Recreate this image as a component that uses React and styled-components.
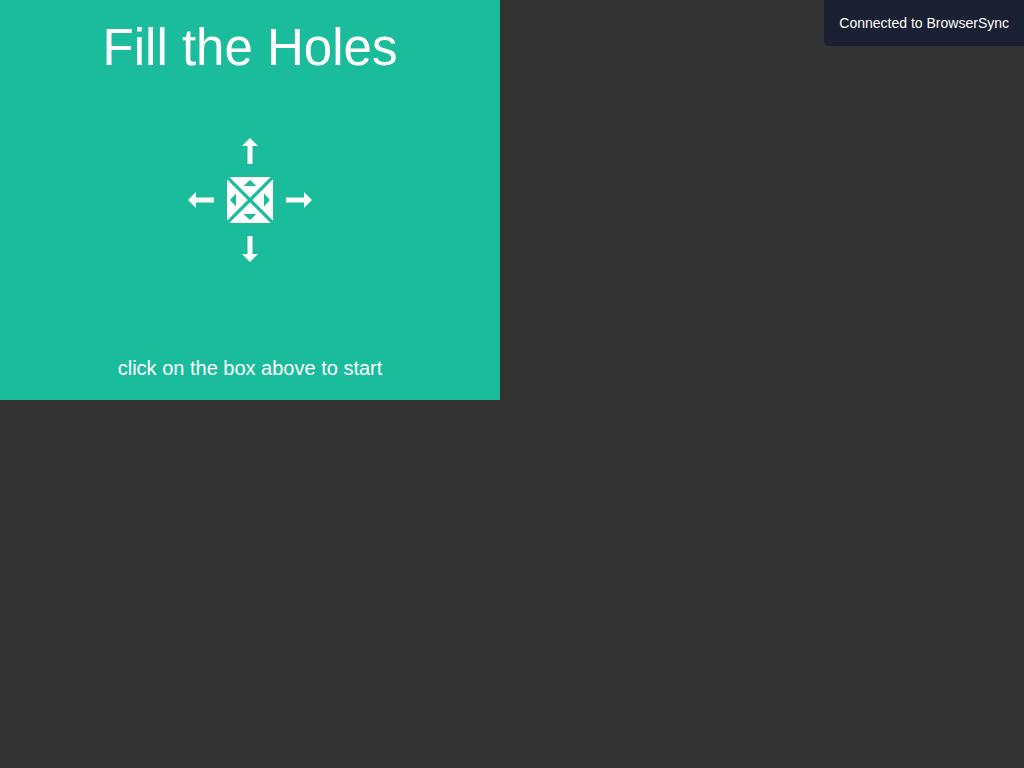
import React from "react";
import styled, { createGlobalStyle } from "styled-components";

const GlobalStyle = createGlobalStyle`
  body {
    margin: 0;
    background: #333333;
    font-family: "Liberation Sans", Arial, sans-serif;
  }
`;

const Game = styled.main`
  box-sizing: border-box;
  display: flex;
  flex-direction: column;
  align-items: center;
  justify-content: space-between;
  width: 100%;
  max-width: 500px;
  min-height: 400px;
  padding: 20px 0;
  background: #1abc9c;
  color: #ffffff;
  text-align: center;
`;

const Title = styled.h1`
  margin: 0;
  font-size: 51px;
  font-weight: 400;
  line-height: 56px;
`;

const Pad = styled.div`
  display: grid;
  grid-template-columns: repeat(3, auto);
  align-items: center;
  justify-items: center;
  gap: 12px;
  margin-bottom: 32px;
`;

const Arrow = styled.svg`
  display: block;
  grid-area: ${(p) => p.$area};
  rotate: ${(p) => p.$turn || "0deg"};
  fill: #ffffff;
`;

const BoxButton = styled.button`
  grid-area: 2 / 2;
  display: block;
  padding: 0;
  border: 0;
  background: transparent;
  cursor: pointer;
`;

const BoxIcon = styled.svg`
  display: block;
`;

const Hint = styled.p`
  margin: 0;
  font-size: 20px;
  line-height: 24px;
`;

const Notice = styled.div`
  position: fixed;
  top: 0;
  right: 0;
  padding: 15px;
  border-bottom-left-radius: 5px;
  background: #1b2032;
  color: #ffffff;
  font-size: 14px;
  line-height: 16px;
`;

const arrows = [
  { name: "up", area: "1 / 2", turn: "0deg" },
  { name: "left", area: "2 / 1", turn: "-90deg" },
  { name: "right", area: "2 / 3", turn: "90deg" },
  { name: "down", area: "3 / 2", turn: "180deg" },
];

export default function App() {
  return (
    <>
      <GlobalStyle />
      <Game>
        <Title>Fill the Holes</Title>
        <Pad>
          {arrows.map((a) => (
            <Arrow key={a.name} $area={a.area} $turn={a.turn} width="28" height="28" viewBox="0 0 28 28" aria-hidden="true">
              <path d="M14 1L22 9H16.5V27H11.5V9H6Z" />
            </Arrow>
          ))}
          <BoxButton type="button" aria-label="Start">
            <BoxIcon width="46" height="46" viewBox="0 0 46 46" aria-hidden="true">
              <rect width="46" height="46" fill="#ffffff" />
              <path d="M0 0L46 46M46 0L0 46" stroke="#1abc9c" strokeWidth="3.2" />
              <path d="M23 3L29.5 9H16.5ZM23 43L29.5 37H16.5ZM3 23L9 16.5V29.5ZM43 23L37 16.5V29.5Z" fill="#1abc9c" />
            </BoxIcon>
          </BoxButton>
        </Pad>
        <Hint>click on the box above to start</Hint>
      </Game>
      <Notice role="status">Connected to BrowserSync</Notice>
    </>
  );
}
